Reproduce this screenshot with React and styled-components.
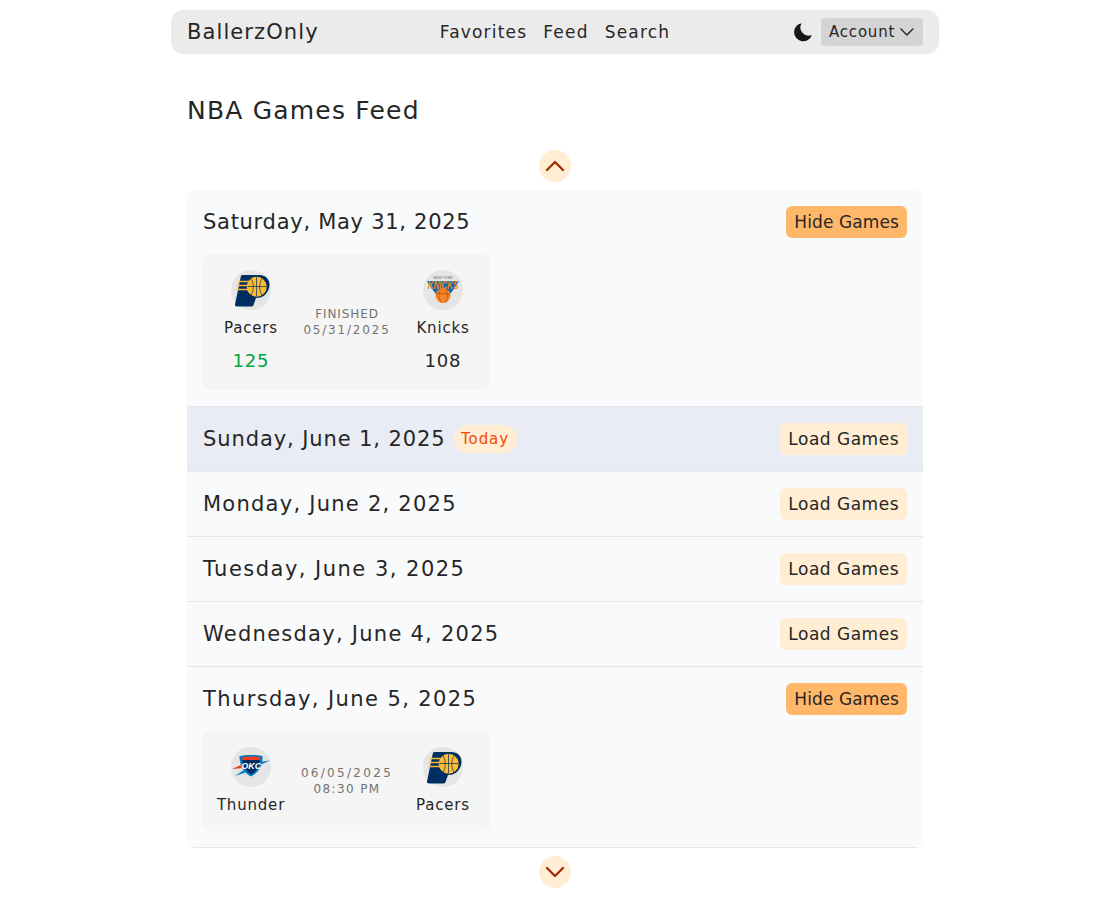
import React from "react";
import styled, { createGlobalStyle } from "styled-components";
import { ChevronUp, ChevronDown } from "lucide-react";

const GlobalStyle = createGlobalStyle`
  body {
    margin: 0;
    padding-right: 4px;
    background: #fff;
    color: #171717;
    font-family: "DejaVu Sans", "Liberation Sans", sans-serif;
  }
`;

const Page = styled.div`
  width: 768px;
  margin: 0 auto;
  padding-top: 10px;
`;

const Nav = styled.nav`
  height: 44px;
  box-sizing: border-box;
  padding: 0 16px;
  display: grid;
  grid-template-columns: 1fr auto 1fr;
  align-items: center;
  background: #ebebeb;
  border-radius: 12px;
`;

const Brand = styled.div`
  font-size: 21px;
  letter-spacing: 1.1px;
  color: #262626;
`;

const NavLinks = styled.div`
  display: flex;
  gap: 16px;
`;

const NavLink = styled.a`
  font-size: 17px;
  letter-spacing: 1.2px;
  color: #262626;
`;

const NavRight = styled.div`
  display: flex;
  align-items: center;
  justify-content: flex-end;
  gap: 8px;
`;

const AccountButton = styled.button`
  height: 28px;
  width: 102px;
  padding: 0 4px 0 8px;
  display: flex;
  align-items: center;
  justify-content: space-between;
  border: 0;
  border-radius: 4px;
  background: #d4d4d4;
  color: #262626;
  font: inherit;
  font-size: 15px;
  letter-spacing: 0.8px;
`;

const Main = styled.main`
  padding: 40px 16px 0;
`;

const Heading = styled.h1`
  margin: 0 0 24px;
  font-size: 25px;
  line-height: 34px;
  font-weight: 400;
  letter-spacing: 1.2px;
  color: #262626;
`;

const ScrollButton = styled.button`
  display: flex;
  align-items: center;
  justify-content: center;
  width: 32px;
  height: 32px;
  margin: ${({ $up }) => ($up ? "-2px auto 8px" : "8px auto")};
  padding: 0;
  border: 0;
  border-radius: 50%;
  background: #ffedd4;
  color: #9f2d00;
`;

const DayList = styled.div`
  background: #f9fafb;
  border-radius: 8px;
  overflow: hidden;
`;

const DaySection = styled.section`
  padding: 16px;
  border-bottom: 1px solid #e5e7eb;
  background: ${({ $today }) => ($today ? "#e9ecf4" : "transparent")};
`;

const DayHeader = styled.div`
  display: flex;
  align-items: center;
  justify-content: space-between;
  height: 32px;
`;

const DayLabel = styled.div`
  display: flex;
  align-items: center;
  gap: 8px;
`;

const DayTitle = styled.h2`
  margin: 0;
  font-size: 21px;
  font-weight: 400;
  letter-spacing: ${({ $spacing }) => $spacing}px;
  color: #262626;
`;

const TodayBadge = styled.span`
  height: 28px;
  width: 63px;
  display: flex;
  align-items: center;
  justify-content: center;
  border-radius: 14px;
  background: #ffedd4;
  color: #f54a00;
  font-size: 15px;
  letter-spacing: 0.9px;
`;

const GamesButton = styled.button`
  height: 32px;
  padding: 0 8px;
  border: 0;
  border-radius: 6px;
  background: ${({ $open }) => ($open ? "#ffb86a" : "#ffedd4")};
  color: #262626;
  font: inherit;
  font-size: 17px;
  letter-spacing: ${({ $open }) => ($open ? "0.1px" : "0.5px")};
`;

const GameCard = styled.div`
  width: 288px;
  box-sizing: border-box;
  margin-top: 16px;
  padding: 16px;
  display: grid;
  grid-template-columns: 64px 1fr 64px;
  align-items: center;
  background: #f5f5f5;
  border-radius: 8px;
`;

const Team = styled.div`
  display: flex;
  flex-direction: column;
  align-items: center;
`;

const LogoCircle = styled.div`
  width: 40px;
  height: 40px;
  border-radius: 50%;
  background: #e5e5e5;
  svg {
    display: block;
  }
`;

const TeamName = styled.div`
  margin-top: 8px;
  font-size: 15px;
  line-height: 20px;
  letter-spacing: 0.8px;
  color: #262626;
  white-space: nowrap;
`;

const Score = styled.div`
  margin-top: 9px;
  font-size: 18px;
  line-height: 27px;
  letter-spacing: 0.8px;
  color: ${({ $winner }) => ($winner ? "#00a63e" : "#262626")};
`;

const Status = styled.div`
  text-align: center;
  color: #737373;
`;

const StatusLine = styled.div`
  font-size: 12px;
  line-height: 16px;
  letter-spacing: ${({ $spacing }) => $spacing}px;
  white-space: nowrap;
`;

const PacersLogo = () => (
  <svg width="40" height="40" viewBox="0 0 40 40">
    <path d="M10 5.5 Q10.5 5 12 5 L28 5 C36 5 40 11 38 18 C36 25 31 28 25 28 L22.5 35 Q22 36.5 20 36.5 L6 36.5 Q3.5 36.5 4 34.5 Z" fill="#002d62" />
    <circle cx="25.7" cy="16.7" r="10" fill="#fdbb30" />
    <path d="M7 11.5 L18 11.5 M6 15.5 L16.5 15.5 M5.5 19.5 L17 19.5" stroke="#fdbb30" strokeWidth="1.3" />
    <path d="M16.5 16.5 L35.5 16.5 M25.5 7 L25.5 26.5 M20 9 C23 13 23 21 20 25 M31 9 C28 13 28 21 31 25" stroke="#002d62" strokeWidth="0.7" fill="none" />
  </svg>
);

const KnicksLogo = () => (
  <svg width="40" height="40" viewBox="0 0 40 40">
    <path d="M4 11 L36 11 L31 19 L27 24 L13 24 L9 19 Z" fill="#006bb6" />
    <text x="20" y="8.5" textAnchor="middle" fontSize="3.6" fontWeight="700" fill="#8d969e" fontFamily="Liberation Sans, sans-serif">NEW YORK</text>
    <circle cx="20" cy="25.5" r="7.5" fill="#f58426" />
    <path d="M13 24 C17 23 23 23 27 25 M17.5 18.8 C15 24 16 29 18.5 32.8 M22.5 18.8 C25 24 25 29 22.5 32.8" stroke="#8a3d05" strokeWidth="0.5" fill="none" />
    <text x="20" y="14.4" textAnchor="middle" fontSize="8" fontWeight="700" fontStyle="italic" fill="#f58426" transform="scale(1 1.32)" fontFamily="Liberation Sans, sans-serif">KNICKS</text>
  </svg>
);

const ThunderLogo = () => (
  <svg width="40" height="40" viewBox="0 0 40 40">
    <path d="M1 22 L11 17.5 L12 21 Z" fill="#ef3b24" />
    <path d="M4 29 L13 23 L14.5 25.5 Z" fill="#007ac1" />
    <path d="M39 13.5 L29 15 L29 18 Z" fill="#007ac1" />
    <path d="M8.5 9 C15 7.5 25 7.5 31.5 9 C32 18 28.5 25 20 29.5 C12 25 8.5 18 8.5 9 Z" fill="#007ac1" />
    <path d="M10.5 10.5 C17 9 24 9 29.5 10.5 L29 13 L11 13 Z" fill="#ef3b24" />
    <path d="M11 13 L29 13 C28.5 19 26 24 20 27.5 C15 24 12 19 11 13 Z" fill="#002d62" />
    <text x="20.3" y="21.5" textAnchor="middle" fontSize="9" fontWeight="700" fontStyle="italic" fill="#fff" fontFamily="Liberation Sans, sans-serif">OKC</text>
  </svg>
);

const MoonIcon = () => (
  <svg width="20" height="20" viewBox="0 0 20 20">
    <path d="M8.6 1.2 A9.1 9.1 0 1 0 18.8 13 A8.2 8.2 0 0 1 8.6 1.2 Z" fill="#171717" />
  </svg>
);

const logos = { Pacers: PacersLogo, Knicks: KnicksLogo, Thunder: ThunderLogo };

const TeamBlock = ({ name, score, winner }) => {
  const Logo = logos[name];
  return (
    <Team>
      <LogoCircle>
        <Logo />
      </LogoCircle>
      <TeamName>{name}</TeamName>
      {score && <Score $winner={winner}>{score}</Score>}
    </Team>
  );
};

const days = [
  {
    title: "Saturday, May 31, 2025",
    spacing: 0.72,
    game: {
      home: { name: "Pacers", score: "125", winner: true },
      away: { name: "Knicks", score: "108" },
      status: [
        { text: "FINISHED", spacing: 0.9 },
        { text: "05/31/2025", spacing: 1.8 },
      ],
    },
  },
  { title: "Sunday, June 1, 2025", spacing: 0.9, today: true },
  { title: "Monday, June 2, 2025", spacing: 1.25 },
  { title: "Tuesday, June 3, 2025", spacing: 1.48 },
  { title: "Wednesday, June 4, 2025", spacing: 1.26 },
  {
    title: "Thursday, June 5, 2025",
    spacing: 1.4,
    game: {
      home: { name: "Thunder" },
      away: { name: "Pacers" },
      status: [
        { text: "06/05/2025", spacing: 2.3 },
        { text: "08:30 PM", spacing: 1.4 },
      ],
    },
  },
];

export default function App() {
  return (
    <Page>
      <GlobalStyle />
      <Nav>
        <Brand>BallerzOnly</Brand>
        <NavLinks>
          <NavLink>Favorites</NavLink>
          <NavLink>Feed</NavLink>
          <NavLink>Search</NavLink>
        </NavLinks>
        <NavRight>
          <MoonIcon />
          <AccountButton>
            Account
            <ChevronDown size={24} strokeWidth={1.4} />
          </AccountButton>
        </NavRight>
      </Nav>
      <Main>
        <Heading>NBA Games Feed</Heading>
        <ScrollButton $up>
          <ChevronUp size={32} strokeWidth={1.7} />
        </ScrollButton>
        <DayList>
          {days.map((day) => (
            <DaySection key={day.title} $today={day.today}>
              <DayHeader>
                <DayLabel>
                  <DayTitle $spacing={day.spacing}>{day.title}</DayTitle>
                  {day.today && <TodayBadge>Today</TodayBadge>}
                </DayLabel>
                <GamesButton $open={!!day.game}>
                  {day.game ? "Hide Games" : "Load Games"}
                </GamesButton>
              </DayHeader>
              {day.game && (
                <GameCard>
                  <TeamBlock {...day.game.home} />
                  <Status>
                    {day.game.status.map((line) => (
                      <StatusLine key={line.text} $spacing={line.spacing}>
                        {line.text}
                      </StatusLine>
                    ))}
                  </Status>
                  <TeamBlock {...day.game.away} />
                </GameCard>
              )}
            </DaySection>
          ))}
        </DayList>
        <ScrollButton>
          <ChevronDown size={32} strokeWidth={1.7} />
        </ScrollButton>
      </Main>
    </Page>
  );
}
